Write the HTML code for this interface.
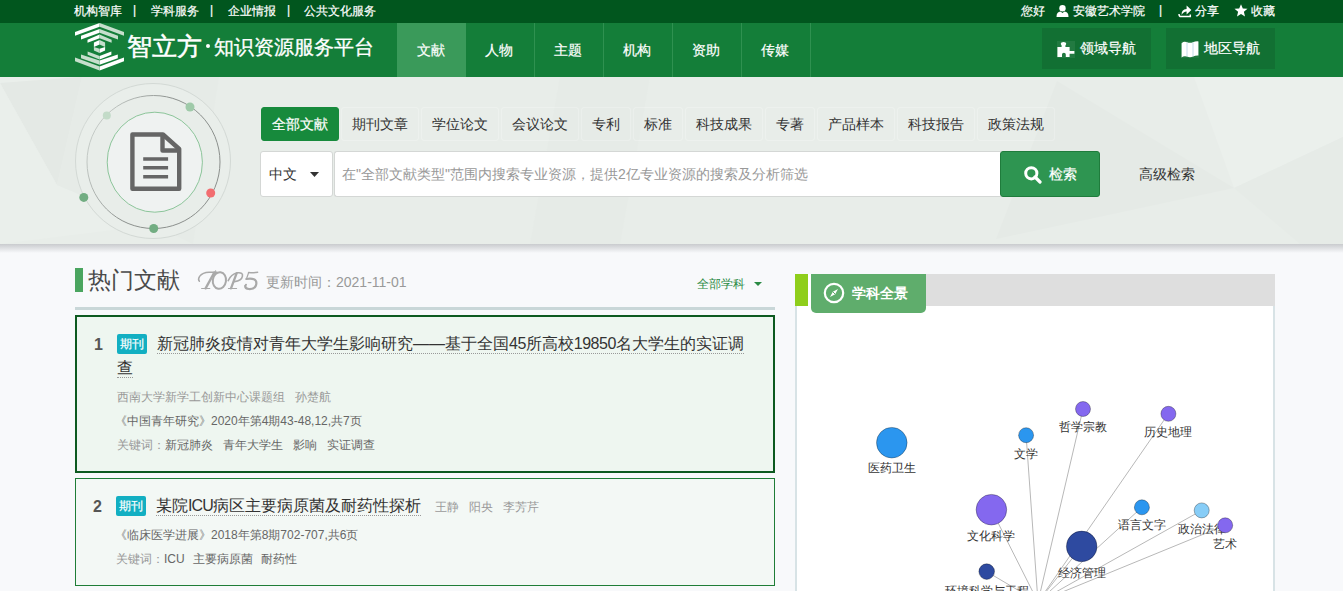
<!DOCTYPE html>
<html><head><meta charset="utf-8">
<style>
*{box-sizing:border-box;margin:0;padding:0}
html,body{width:1343px;height:591px;overflow:hidden}
body{position:relative;background:#f8f9fb;font-family:"Liberation Sans",sans-serif;color:#333;}
#top .t,.nav,.rbtn,.tab.on,.wt{-webkit-text-stroke:0.2px currentColor}
.a{position:absolute;white-space:nowrap}
#top{left:0;top:0;width:1343px;height:23px;background:#01561e}
#top .t{position:absolute;top:0;line-height:23px;font-size:12px;color:#fff}
#hdr{left:0;top:23px;width:1343px;height:54px;background:#147e39}
.nav{position:absolute;top:0;height:54px;width:68px;line-height:54px;text-align:center;font-size:14px;color:#fff;text-indent:-2px}
.sep{position:absolute;top:0;width:1px;height:54px;background:#2f9150}
.rbtn{position:absolute;top:5px;height:41px;width:109px;background:#127033;color:#fff;font-size:14px;line-height:41px}
#search{left:0;top:77px;width:1343px;height:167px;background:#e8ede9;overflow:hidden}
#shadow{left:0;top:244px;width:1343px;height:9px;background:linear-gradient(#c9cbce,rgba(247,248,250,0))}
.tab{position:absolute;top:30px;height:34px;line-height:32px;font-size:14px;color:#333;text-align:center;border:1px solid rgba(255,255,255,0.22);border-radius:3px}
.tab.on{background:#178a3c;color:#fff;border-color:#178a3c}
</style></head>
<body>
<!-- top bar -->
<div id="top" class="a">
  <span class="t" style="left:74px">机构智库</span>
  <span class="t" style="left:133px;top:-1px">|</span>
  <span class="t" style="left:151px">学科服务</span>
  <span class="t" style="left:210px;top:-1px">|</span>
  <span class="t" style="left:228px">企业情报</span>
  <span class="t" style="left:287px;top:-1px">|</span>
  <span class="t" style="left:304px">公共文化服务</span>

  <span class="t" style="left:1021px">您好</span>
  <svg class="a" style="left:1056px;top:5px" width="13" height="12" viewBox="0 0 13 12"><circle cx="6.5" cy="3.2" r="3.2" fill="#fff"/><path d="M0.5 12 Q0.5 6.8 4.5 6.6 L6.5 8 L8.5 6.6 Q12.5 6.8 12.5 12Z" fill="#fff"/></svg>
  <span class="t" style="left:1073px">安徽艺术学院</span>
  <span class="t" style="left:1159px;top:-1px">|</span>
  <svg class="a" style="left:1178px;top:5px" width="14" height="13" viewBox="0 0 14 13"><path d="M1 9 Q1 11.6 3 11.6 H12.3 V9.5" stroke="#fff" stroke-width="1.5" fill="none"/><path d="M3.6 10 Q3.2 4.3 8.6 4 V0.6 L13.4 5 L8.6 9.4 V6.4 Q5.4 6.4 3.6 10Z" fill="#fff"/></svg>
  <span class="t" style="left:1195px">分享</span>
  <svg class="a" style="left:1234px;top:4px" width="14" height="13" viewBox="0 0 14 13"><path d="M7 0.3 L8.8 4.5 L13.5 4.8 L9.9 7.8 L11 12.5 L7 9.9 L3 12.5 L4.1 7.8 L0.5 4.8 L5.2 4.5Z" fill="#fff"/></svg>
  <span class="t" style="left:1251px">收藏</span>
</div>

<!-- header -->
<div id="hdr" class="a">
  <svg class="a" style="left:75px;top:0px" width="50" height="48" viewBox="0 0 50 48">
    <g fill="#fff">
      <polygon points="0,9 24.6,0 24.6,3.8 0,12.8"/>
      <polygon points="6,12.8 24.6,6 24.6,9.8 6,16.4"/>
      <polygon points="12.5,16.8 24.6,11.6 24.6,15.2 12.5,19.8"/>
      <polygon points="18.9,19.4 24.6,17 24.6,21.4 18.9,23.9"/>
      <polygon points="24.6,25.7 30.1,23.9 30.1,27.4 24.6,30"/>
      <polygon points="24.6,33 36.4,28.4 36.4,31.8 24.6,36.4"/>
      <polygon points="24.6,37.6 42.8,31.4 42.8,35.2 24.6,41.8"/>
      <polygon points="24.6,43.4 49,34.4 49,38.2 24.6,47.4"/>
    </g>
    <g fill="#c6dfcc">
      <polygon points="49,9 24.6,0 24.6,3.8 49,12.8"/>
      <polygon points="43,12.8 24.6,6 24.6,9.8 43,16.4"/>
      <polygon points="36.6,16.8 24.6,11.6 24.6,15.2 36.6,19.8"/>
      <polygon points="30.1,19.4 24.6,17 24.6,21.4 30.1,23.9"/>
      <polygon points="24.6,25.7 18.9,23.9 18.9,27.4 24.6,30"/>
      <polygon points="24.6,33 12.6,28.4 12.6,31.8 24.6,36.4"/>
      <polygon points="24.6,37.6 6,31.4 6,35.2 24.6,41.8"/>
      <polygon points="24.6,43.4 0,34.4 0,38.2 24.6,47.4"/>
    </g>
  </svg>
  <span class="a" style="left:127px;top:0;line-height:48px;font-size:24.5px;color:#fff;-webkit-text-stroke:0.5px #fff">智立方</span>
  <div class="a" style="left:206px;top:21.3px;width:4px;height:4px;border-radius:2px;background:#fff"></div>
  <span class="a" style="left:214px;top:0;line-height:48px;font-size:20px;color:#fff;-webkit-text-stroke:0.3px #fff">知识资源服务平台</span>

  <div class="a" style="left:397px;top:0;width:69px;height:54px;background:#3a9a5a"></div>
  <div class="nav" style="left:397px;width:69px">文献</div>
  <div class="sep" style="left:534px"></div>
  <div class="nav" style="left:466px">人物</div>
  <div class="sep" style="left:603px"></div>
  <div class="nav" style="left:535px">主题</div>
  <div class="sep" style="left:672px"></div>
  <div class="nav" style="left:604px">机构</div>
  <div class="sep" style="left:741px"></div>
  <div class="nav" style="left:673px">资助</div>
  <div class="sep" style="left:810px"></div>
  <div class="nav" style="left:742px">传媒</div>

  <div class="rbtn" style="left:1042px">
    <svg class="a" style="left:15px;top:13px" width="18" height="17" viewBox="0 0 18 17"><rect width="18" height="17" fill="rgba(255,255,255,0.07)"/><path d="M0.4 6 H4.6 V4.6 Q3.8 3.8 3.8 2.6 Q3.8 1 6.5 1 Q9.2 1 9.2 2.6 Q9.2 3.8 8.4 4.6 V6 H12.6 V10 H17.4 V12.8 H12.6 V16 H8.8 V13.6 Q8.8 11.8 6.9 11.8 Q5 11.8 5 13.6 V16 H0.4Z" fill="#fff"/></svg>
    <span class="a" style="left:38px;top:0">领域导航</span>
  </div>
  <div class="rbtn" style="left:1166px">
    <svg class="a" style="left:15px;top:13px" width="18" height="17" viewBox="0 0 18 17"><rect width="18" height="17" fill="rgba(255,255,255,0.05)"/><path d="M0.6 2.2 Q3 0 6 1.2 Q9 2.4 12 1.2 Q14.5 0.2 17.4 0.4 V14.6 Q14.5 14.4 12 15.6 Q9 16.8 6 15.6 Q3 14.4 0.6 16.4Z" fill="#fff"/><path d="M6 1.6 V15.4 M12 1.6 V15.4" stroke="#bcd8e6" stroke-width="0.9"/></svg>
    <span class="a" style="left:38px;top:0">地区导航</span>
  </div>
</div>

<!-- search -->
<div id="search" class="a">
  <svg class="a" style="left:0;top:0" width="1343" height="167">
    <polygon points="0,0 82,0 0,6" fill="#eaefeb"/>
    <polygon points="0,6 82,0 57,108" fill="#e4e9e5"/>
    <polygon points="0,6 57,108 153,148 0,167" fill="#eaefeb"/>
    <polygon points="82,0 219,0 193,167 153,148 57,108" fill="#e6ebe7"/>
    <polygon points="560,0 650,0 620,167 530,167" fill="#e6ebe7"/>
    <polygon points="1194,0 1343,0 1343,60 1234,111" fill="#ebf0ec"/>
    <polygon points="1057,4 1234,111 996,162" fill="#e5eae6"/>
    <polygon points="1234,111 1343,60 1343,167 1300,167" fill="#e6ebe7"/>
  </svg>
  <svg class="a" style="left:70px;top:1px" width="170" height="170" viewBox="0 0 170 170">
    <circle cx="83" cy="83" r="77.5" fill="#e9eeea" stroke="#d3d9d5" stroke-width="1"/>
    <defs><linearGradient id="rg" x1="0" y1="0.3" x2="1" y2="0.7"><stop offset="0" stop-color="#c9cfcb"/><stop offset="0.45" stop-color="#8c918e"/><stop offset="1" stop-color="#8a8e8b"/></linearGradient></defs><circle cx="83.5" cy="84" r="66.5" fill="#e8ede9" stroke="url(#rg)" stroke-width="1"/>
    <ellipse cx="84.8" cy="84.2" rx="47.6" ry="50" fill="#eff2f1" stroke="#8cc59a" stroke-width="1"/>
    <path d="M62.4 56.5 H93 L109.2 71 V110.8 H62.4Z" fill="none" stroke="#666" stroke-width="4.4" stroke-linejoin="round"/>
    <path d="M92.5 56.5 V72.5 H109.2" fill="none" stroke="#666" stroke-width="4.4" stroke-linejoin="round"/>
    <path d="M73.2 81.1 H98.1 M73.2 89.7 H98.1 M73.2 98.7 H98.1" stroke="#666" stroke-width="3.5"/>
    <circle cx="36.8" cy="37.4" r="4" fill="#c3dbc8"/>
    <circle cx="120" cy="29" r="4.5" fill="#9fcaa9"/>
    <circle cx="140.7" cy="115" r="4.5" fill="#f26d70"/>
    <circle cx="13.8" cy="119.4" r="4.5" fill="#72ad82"/>
    <circle cx="83.7" cy="150.5" r="4.5" fill="#72ad82"/>
  </svg>
  <div class="tab on" style="left:261px;width:78px">全部文献</div>
  <div class="tab" style="left:341px;width:78px">期刊文章</div>
  <div class="tab" style="left:421px;width:78px">学位论文</div>
  <div class="tab" style="left:501px;width:78px">会议论文</div>
  <div class="tab" style="left:581px;width:50px">专利</div>
  <div class="tab" style="left:633px;width:50px">标准</div>
  <div class="tab" style="left:685px;width:78px">科技成果</div>
  <div class="tab" style="left:765px;width:50px">专著</div>
  <div class="tab" style="left:817px;width:78px">产品样本</div>
  <div class="tab" style="left:897px;width:78px">科技报告</div>
  <div class="tab" style="left:977px;width:78px">政策法规</div>

  <div class="a" style="left:260px;top:74px;width:73px;height:46px;background:#fff;border:1px solid #d4d7d5;border-radius:3px"></div>
  <span class="a" style="left:269px;top:74px;line-height:46px;font-size:14px;color:#333">中文</span>
  <svg class="a" style="left:310px;top:95px" width="9" height="5"><path d="M0 0 H9 L4.5 5Z" fill="#333"/></svg>
  <div class="a" style="left:334px;top:74px;width:667px;height:46px;background:#fff;border:1px solid #d4d7d5;border-right:0;border-radius:3px 0 0 3px"></div>
  <span class="a" style="left:342px;top:74px;line-height:46px;font-size:14px;color:#999">在"全部文献类型"范围内搜索专业资源，提供2亿专业资源的搜索及分析筛选</span>
  <div class="a" style="left:1000px;top:74px;width:100px;height:46px;background:#2e9551;border:1px solid #1f7c3c;border-radius:3px"></div>
  <svg class="a" style="left:1024px;top:89px" width="18" height="18" viewBox="0 0 18 18"><circle cx="7.3" cy="7.3" r="5.6" fill="none" stroke="#fff" stroke-width="3"/><path d="M11 11 L16 16" stroke="#fff" stroke-width="3.2" stroke-linecap="round"/></svg>
  <span class="a" style="left:1049px;top:74px;line-height:46px;font-size:14px;color:#fff;-webkit-text-stroke:0.2px #fff">检索</span>
  <span class="a" style="left:1139px;top:74px;line-height:46px;font-size:14px;color:#333">高级检索</span>
</div>
<div id="shadow" class="a"></div>

<!-- heading -->
<div class="a" style="left:75px;top:268px;width:8px;height:24px;background:#4aa55f"></div>
<span class="a" style="left:88px;top:264px;line-height:32px;font-size:23px;color:#4a4a4a">热门文献</span>
<svg class="a" style="left:190px;top:265px" width="75" height="30" viewBox="0 0 75 30">
 <g fill="none" stroke="#a9a9a9" stroke-linecap="round">
  
  <path d="M9.4 16.3 Q7.6 14.6 9.6 11.4 Q12.6 7.4 19 7.3 L26.6 7.2" stroke-width="1.5"/>
  <path d="M24.4 7.4 L15.6 23.4" stroke-width="2.3"/>
  <path d="M11.6 23.5 H19.8" stroke-width="1.1"/>
  <path d="M25.6 5.6 V8.4" stroke-width="0.9"/>
  
  <ellipse cx="29.4" cy="15.5" rx="6.6" ry="8.3" transform="rotate(8 29.4 15.5)" stroke-width="2"/>
  
  <path d="M38.2 15.6 Q41 9.4 47.2 7.8 Q53.4 7 52.4 11.4 Q51.6 15.8 44.4 16.6" stroke-width="1.6"/>
  <path d="M46.6 8.4 L41 23.3" stroke-width="2.3"/>
  <path d="M38.4 23.5 H46.6" stroke-width="1.1"/>
  
  <path d="M58.6 7.6 Q63 7.8 67.6 7.2" stroke-width="1.5"/>
  <path d="M58.6 7.8 L56.4 14" stroke-width="1.2"/>
  <path d="M56.4 14 Q66.4 12.6 66.4 18.2 Q66 24.4 58.8 24 Q55 23.6 55.2 20.8" stroke-width="2.2"/>
  <circle cx="56" cy="19.8" r="1" fill="#a9a9a9" stroke="none"/>
 </g>
</svg>
<span class="a" style="left:266px;top:272px;line-height:20px;font-size:14px;color:#999">更新时间：2021-11-01</span>
<span class="a" style="left:697px;top:274px;line-height:20px;font-size:12px;color:#2a8a44">全部学科</span>
<svg class="a" style="left:754px;top:282px" width="8" height="4"><path d="M0 0 H8 L4 4Z" fill="#2a8a44"/></svg>
<div class="a" style="left:75px;top:307px;width:700px;height:3px;background:#c9d7d8"></div>

<!-- item 1 -->
<div class="a" style="left:75px;top:315px;width:700px;height:158px;background:#eef6f0;border:2px solid #0d5a20"></div>
<span class="a" style="left:94px;top:333px;line-height:24px;font-size:16px;font-weight:bold;color:#555">1</span>
<div class="a" style="left:117px;top:332px;width:640px;white-space:normal;line-height:24px;font-size:16px;color:#333"><span style="display:inline-block;vertical-align:top;margin-top:2px;width:30px;height:20px;line-height:20px;text-align:center;font-size:12px;color:#fff;-webkit-text-stroke:0.2px #fff;background:#12afc2;border-radius:2px;margin-right:10px">期刊</span><span style="border-bottom:1px dotted #999;padding-bottom:1px">新冠肺炎疫情对青年大学生影响研究——基于全国<span style="letter-spacing:-0.5px">45</span>所高校<span style="letter-spacing:-0.5px">19850</span>名大学生的实证调<br>查</span></div>
<span class="a" style="left:117px;top:385px;line-height:24px;font-size:12px;color:#999">西南大学新学工创新中心课题组<span style="margin-left:10px">孙楚航</span></span>
<span class="a" style="left:115px;top:409px;line-height:24px;font-size:12px;color:#666">《中国青年研究》2020年第4期43-48,12,共7页</span>
<span class="a" style="left:117px;top:433px;line-height:24px;font-size:12px;color:#999">关键词：<span style="color:#666">新冠肺炎</span><span style="color:#666;margin-left:10px">青年大学生</span><span style="color:#666;margin-left:10px">影响</span><span style="color:#666;margin-left:10px">实证调查</span></span>

<!-- item 2 -->
<div class="a" style="left:75px;top:478px;width:700px;height:108px;background:#f3f8f5;border:1px solid #1f7d37"></div>
<span class="a" style="left:93px;top:495px;line-height:24px;font-size:16px;font-weight:bold;color:#555">2</span>
<span class="a" style="left:116px;top:496px;width:30px;height:20px;line-height:20px;text-align:center;font-size:12px;color:#fff;-webkit-text-stroke:0.2px #fff;background:#12afc2;border-radius:2px">期刊</span>
<span class="a" style="left:156px;top:494px;line-height:24px;font-size:16px;color:#333"><span style="border-bottom:1px dotted #999;padding-bottom:1px">某院<span style="letter-spacing:-0.9px">ICU</span>病区主要病原菌及耐药性探析</span><span style="font-size:12px;color:#999;margin-left:14px">王静</span><span style="font-size:12px;color:#999;margin-left:10px">阳央</span><span style="font-size:12px;color:#999;margin-left:10px">李芳芹</span></span>
<span class="a" style="left:115px;top:523px;line-height:24px;font-size:12px;color:#666">《临床医学进展》2018年第8期702-707,共6页</span>
<span class="a" style="left:116px;top:547px;line-height:24px;font-size:12px;color:#999">关键词：<span style="color:#666">ICU</span><span style="color:#666;margin-left:8px">主要病原菌</span><span style="color:#666;margin-left:8px">耐药性</span></span>

<!-- right panel -->
<div class="a" style="left:795px;top:274px;width:480px;height:330px;background:#fff;border:2px solid #d8e3e6;border-top:0"></div>
<div class="a" style="left:795px;top:274px;width:480px;height:32px;background:#dedede"></div>
<div class="a" style="left:795px;top:274px;width:13px;height:32px;background:#8fce1b"></div>
<div class="a" style="left:808px;top:274px;width:3px;height:32px;background:#fff"></div>
<div class="a" style="left:811px;top:274px;width:115px;height:39px;background:#5fad6c;border-radius:0 0 5px 5px"></div>
<svg class="a" style="left:823px;top:282px" width="22" height="22" viewBox="0 0 22 22"><circle cx="11" cy="11" r="9.2" fill="none" stroke="#fff" stroke-width="2.2"/><path d="M15 7 L12.2 12.2 L7 15 L9.8 9.8Z" fill="#fff"/><path d="M9.8 9.8 L12.2 12.2" stroke="#5fad6c" stroke-width="1"/></svg>
<span class="a" style="left:852px;top:283.5px;line-height:20px;font-size:13.5px;font-weight:bold;color:#fff">学科全景</span>

<svg class="a" style="left:797px;top:306px" width="476" height="285" viewBox="797 306 476 285">
  <g stroke="#b8b8b8" stroke-width="1"><line x1="1026.1" y1="435.2" x2="1038" y2="602"/><line x1="991.4" y1="509.7" x2="1038" y2="602"/><line x1="986.7" y1="571.6" x2="1038" y2="602"/><line x1="1083" y1="409" x2="1038" y2="602"/><line x1="1168.4" y1="413.8" x2="1038" y2="602"/><line x1="1141.9" y1="507.3" x2="1038" y2="602"/><line x1="1081.7" y1="546.4" x2="1038" y2="602"/><line x1="1201.7" y1="510.4" x2="1038" y2="602"/><line x1="1225.2" y1="525.3" x2="1038" y2="602"/></g>
  <g font-size="12" fill="#333" text-anchor="middle" font-family="Liberation Sans, sans-serif"><circle cx="891.8" cy="442.7" r="15.3" fill="#2b96ef" stroke="rgba(0,0,0,0.3)"/><text x="891.8" y="472.0">医药卫生</text><circle cx="1026.1" cy="435.2" r="7.5" fill="#2b96ef" stroke="rgba(0,0,0,0.3)"/><text x="1026.1" y="457.5">文学</text><circle cx="991.4" cy="509.7" r="15.3" fill="#8468ef" stroke="rgba(0,0,0,0.3)"/><text x="991.4" y="540.0">文化科学</text><circle cx="986.7" cy="571.6" r="7.8" fill="#2e4aa0" stroke="rgba(0,0,0,0.3)"/><text x="986.7" y="594.5">环境科学与工程</text><circle cx="1083" cy="409" r="7.5" fill="#8468ef" stroke="rgba(0,0,0,0.3)"/><text x="1083" y="431.0">哲学宗教</text><circle cx="1168.4" cy="413.8" r="7.5" fill="#8468ef" stroke="rgba(0,0,0,0.3)"/><text x="1168.4" y="436.0">历史地理</text><circle cx="1141.9" cy="507.3" r="7.5" fill="#2b96ef" stroke="rgba(0,0,0,0.3)"/><text x="1141.9" y="528.8">语言文字</text><circle cx="1081.7" cy="546.4" r="15.3" fill="#2e4aa0" stroke="rgba(0,0,0,0.3)"/><text x="1081.7" y="576.5">经济管理</text><circle cx="1201.7" cy="510.4" r="7.5" fill="#87cdf7" stroke="rgba(0,0,0,0.3)"/><text x="1201.7" y="533.2">政治法律</text><circle cx="1225.2" cy="525.3" r="7.5" fill="#8468ef" stroke="rgba(0,0,0,0.3)"/><text x="1225.2" y="547.5">艺术</text></g>
</svg>


</body></html>
